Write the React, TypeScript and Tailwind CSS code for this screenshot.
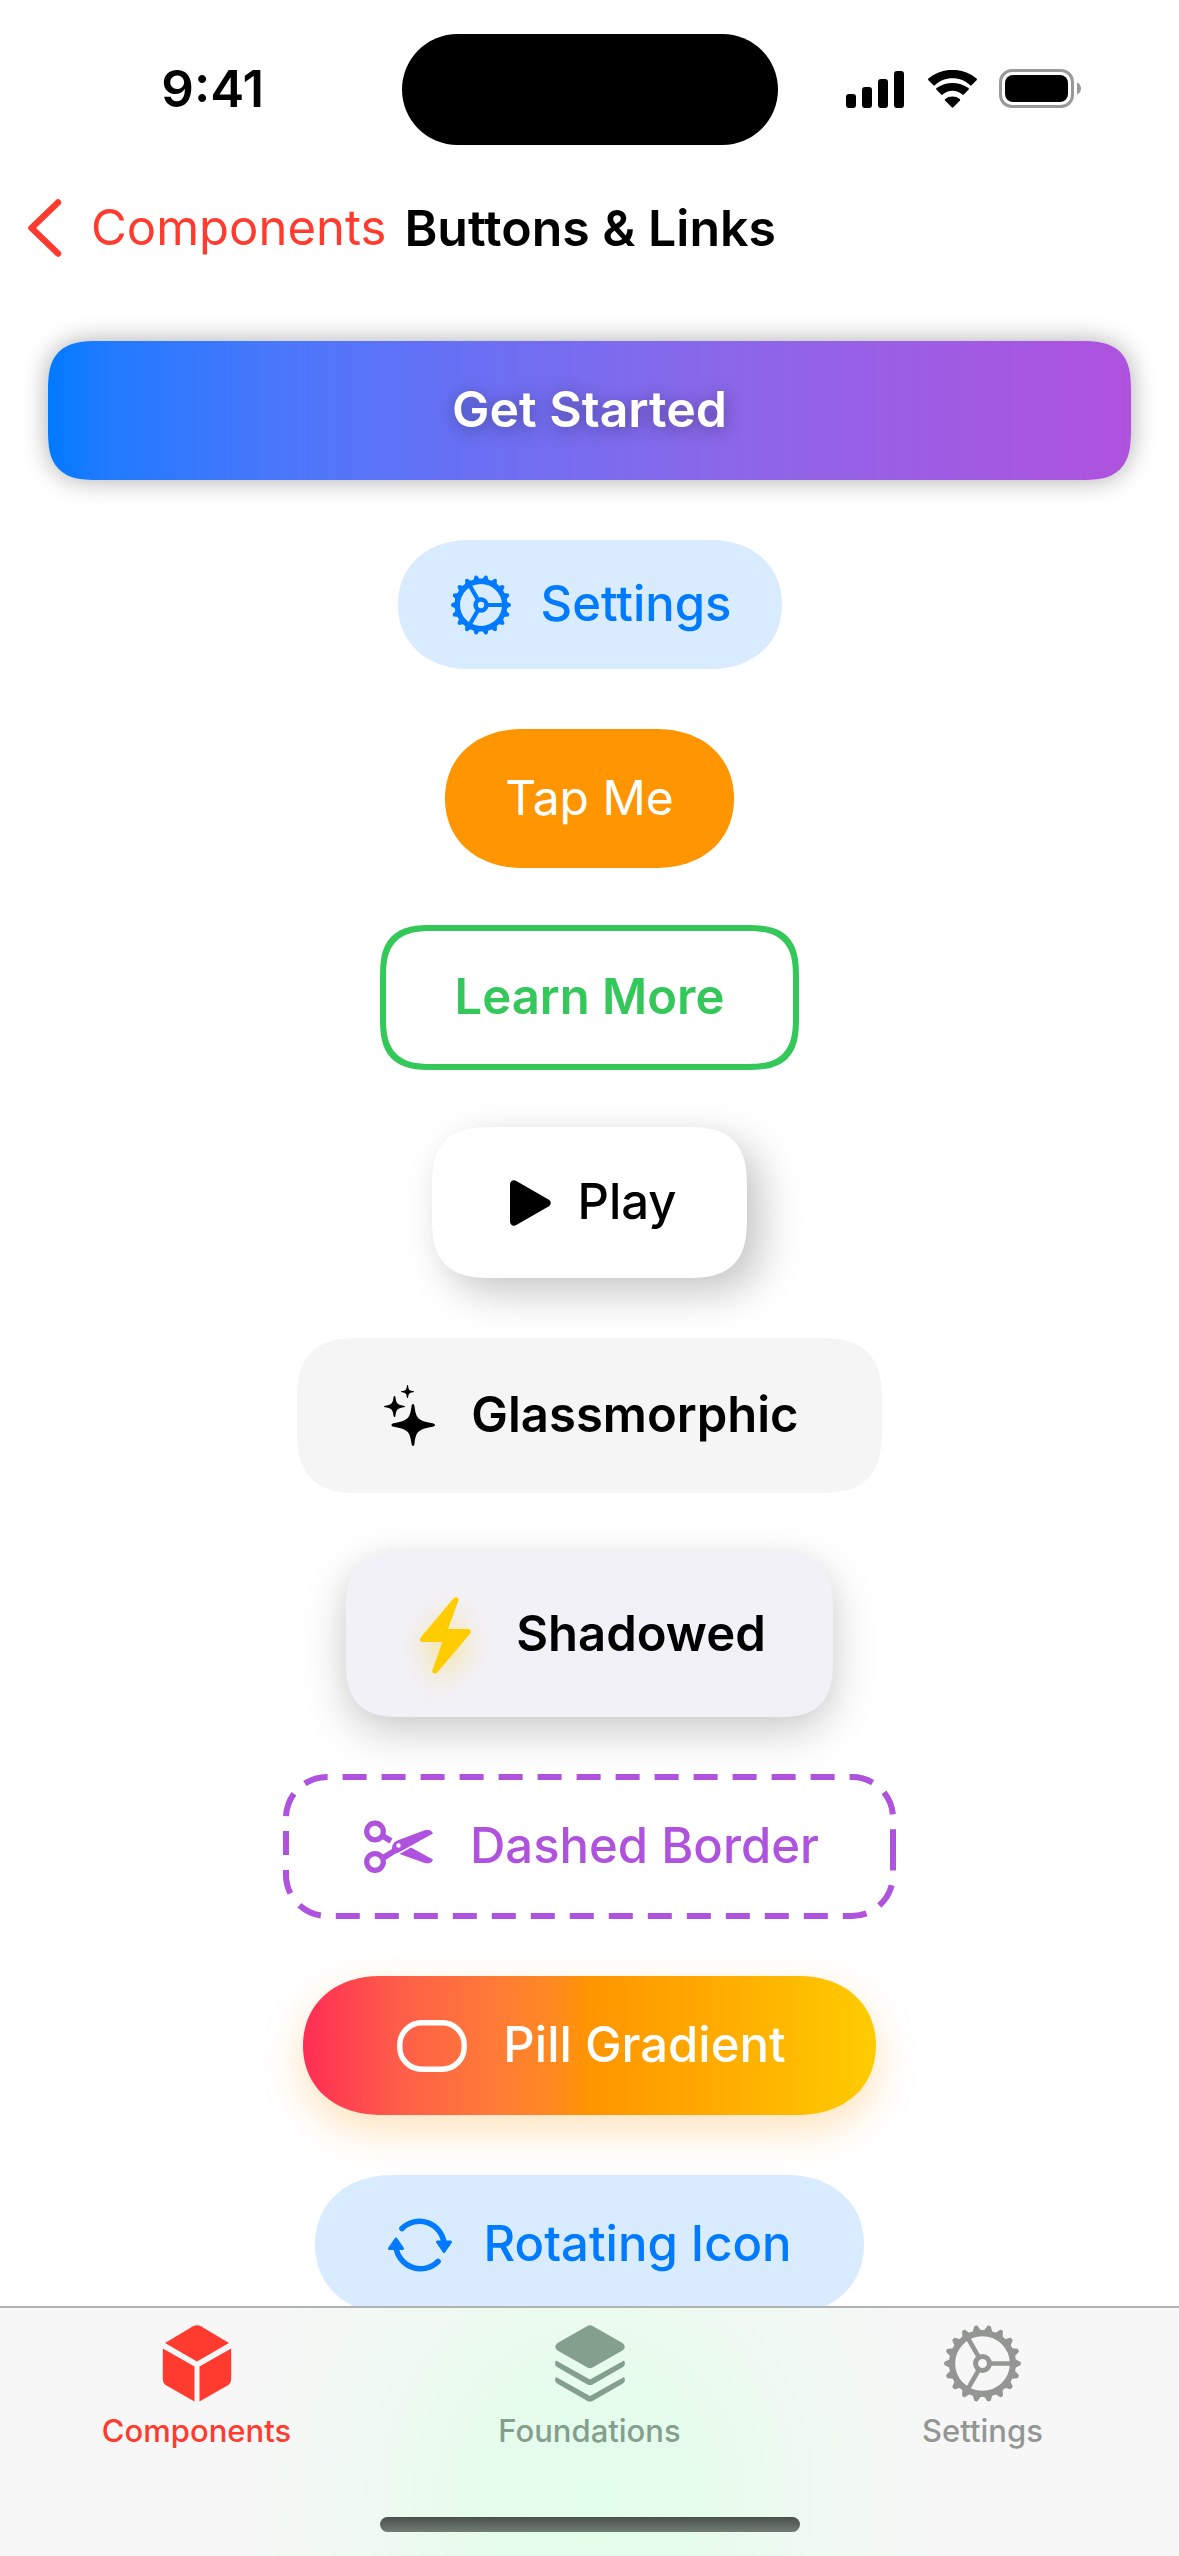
import type { ReactNode } from "react";

const rad = (d: number) => (d * Math.PI) / 180;
const pt = (r: number, d: number) =>
  `${(50 + r * Math.cos(rad(d))).toFixed(2)} ${(50 - r * Math.sin(rad(d))).toFixed(2)}`;

const TEETH = Array.from({ length: 18 }, (_, i) => {
  const a = i * 20;
  return `M${pt(41, a - 7)}L${pt(48.5, a - 1.5)}L${pt(48.5, a + 1.5)}L${pt(41, a + 7)}Z`;
}).join("");

function Gear({ className, weight = 7 }: { className: string; weight?: number }) {
  return (
    <svg viewBox="0 0 100 100" className={className} fill="none" stroke="currentColor" aria-hidden="true">
      <path d={TEETH} fill="currentColor" strokeWidth="2.5" strokeLinejoin="round" />
      <circle cx="50" cy="50" r="39.5" strokeWidth={weight + 1} />
      <circle cx="50" cy="50" r="9" strokeWidth={weight - 0.5} />
      <path
        d={`M${pt(11, 0)}L${pt(38, 0)}M${pt(11, 120)}L${pt(38, 120)}M${pt(11, 240)}L${pt(38, 240)}`}
        strokeWidth={weight - 1}
      />
    </svg>
  );
}

function Label({ children }: { children: ReactNode }) {
  return <span className="block pb-[3px]">{children}</span>;
}

function StatusBar() {
  return (
    <div className="grid h-[178px] grid-cols-[1fr_376px_1fr] items-center">
      <time className="pb-px pl-6 text-center text-[51px] leading-[60px] font-semibold">9:41</time>
      <div className="h-[111px] rounded-full bg-black" />
      <div className="flex h-[39px] items-center justify-center gap-[21px] pr-[28px]">
        <svg viewBox="0 0 60 38" className="h-[38px] w-[60px]" aria-label="Cellular signal">
          <rect x="0" y="24" width="10" height="14" rx="3" />
          <rect x="16" y="17" width="10" height="21" rx="3" />
          <rect x="32" y="9" width="10" height="29" rx="3" />
          <rect x="48" y="1" width="10" height="37" rx="3" />
        </svg>
        <svg viewBox="0 0 51 38" className="h-[38px] w-[51px]" aria-label="Wi-Fi">
          <path d="M25.5 8.3C32.3 8.3 38.500 10.900 43.200 15.300C43.600 15.700 44.200 15.700 44.600 15.300L49.600 10.200C50.100 9.700 50.100 9 49.600 8.500C36.100-3.100 14.900-3.100 1.400 8.500C.9 9 .9 9.700 1.400 10.200L6.400 15.300C6.800 15.700 7.400 15.700 7.800 15.300C12.500 10.900 18.700 8.300 25.500 8.300Z" />
          <path d="M25.500 20.800C29.200 20.800 32.700 22.200 35.400 24.600C35.800 25 36.400 25 36.800 24.600L41.500 19.800C42 19.300 42 18.600 41.500 18.100C32.500 11.200 18.500 11.200 9.500 18.100C9 18.600 9 19.300 9.500 19.800L14.200 24.600C14.600 25 15.200 25 15.600 24.600C18.300 22.200 21.800 20.800 25.500 20.800Z" />
          <path d="M32.800 30.700C33.300 30.200 33.300 29.400 32.700 29C28.600 25.700 22.400 25.700 18.300 29C17.700 29.400 17.700 30.200 18.200 30.700L24.700 37.300C25.200 37.800 25.800 37.800 26.300 37.300Z" />
        </svg>
        <svg viewBox="0 0 84 40" className="h-[40px] w-[84px]" aria-label="Battery">
          <rect x="1.500" y="1.500" width="72" height="36" rx="11.500" fill="none" stroke="#999" strokeWidth="3" />
          <rect x="6" y="6" width="63" height="27" rx="8" />
          <path d="M78 13.500C80.800 14.500 82 17 82 19.500S80.800 24.500 78 25.500Z" fill="#999" />
        </svg>
      </div>
    </div>
  );
}

function NavBar() {
  return (
    <header className="flex h-[99px] items-center gap-[18px] px-[27px] leading-[60px]">
      <a href="#components" className="flex items-center gap-[28px] text-[49px] text-[#ff3b30]">
        <svg viewBox="0 0 36 60" className="h-[60px] w-[36px]" fill="none" stroke="currentColor" aria-hidden="true">
          <path d="M31 4.500L4.500 30L31 55.500" strokeWidth="6.500" strokeLinecap="round" strokeLinejoin="round" />
        </svg>
        <span>Components</span>
      </a>
      <h1 className="text-[50px] font-semibold">Buttons &amp; Links</h1>
    </header>
  );
}

function Tab({ label, active, tint, children }: { label: string; active?: boolean; tint: string; children: ReactNode }) {
  return (
    <button
      type="button"
      aria-current={active ? "page" : undefined}
      className={`flex flex-col items-center gap-[12px] pt-[17px] text-[31px] leading-[34px] font-medium ${tint}`}
    >
      {children}
      {label}
    </button>
  );
}

export default function App() {
  return (
    <div className="flex h-screen flex-col overflow-hidden bg-white font-['Inter',sans-serif] text-black">
      <StatusBar />
      <NavBar />
      <main className="flex min-h-0 flex-1 flex-col items-center gap-[60px] overflow-hidden px-12 pt-[64px] text-[49px] leading-[61px] *:shrink-0">
        <button
          type="button"
          className="h-[139px] w-full rounded-[36px] bg-linear-[90deg,#007aff,#1f7aff_5%,#4777fb_20%,#6b6ff3_40%,#8868ea_60%,#9c5de4_80%,#af52de] text-[50px] font-semibold text-white shadow-[0_0_26px_rgba(0,0,0,0.33)] text-shadow-[0_3px_18px_rgba(0,0,0,0.35)] supports-[corner-shape:squircle]:rounded-[50px] supports-[corner-shape:squircle]:[corner-shape:superellipse(1.5)]"
        >
          <Label>Get Started</Label>
        </button>
        <button
          type="button"
          className="flex h-[129px] items-center gap-[30px] rounded-full bg-[#d9ebff] pr-[50px] pl-[53px] font-medium text-[#007aff] supports-[corner-shape:squircle]:rounded-[72px/65px] supports-[corner-shape:squircle]:[corner-shape:superellipse(1.1)]"
        >
          <Gear className="size-[60px]" weight={8} />
          <Label>Settings</Label>
        </button>
        <button
          type="button"
          className="h-[139px] rounded-full bg-[#ff9500] px-[60px] text-[48px] text-white supports-[corner-shape:squircle]:rounded-[78px/70px] supports-[corner-shape:squircle]:[corner-shape:superellipse(1.1)]"
        >
          <Label>Tap Me</Label>
        </button>
        <button
          type="button"
          className="h-[139px] rounded-[36px] px-[72px] font-semibold text-[#34c759] outline-6 -outline-offset-3 outline-[#34c759] supports-[corner-shape:squircle]:rounded-[50px] supports-[corner-shape:squircle]:[corner-shape:superellipse(1.5)]"
        >
          <Label>Learn More</Label>
        </button>
        <button
          type="button"
          className="flex h-[151px] items-center gap-[25px] rounded-[45px] bg-white pr-[70px] pl-[78px] font-medium shadow-[15px_15px_42px_rgba(0,0,0,0.22),0_0_30px_rgba(0,0,0,0.02)] supports-[corner-shape:squircle]:rounded-[62px] supports-[corner-shape:squircle]:[corner-shape:superellipse(1.5)]"
        >
          <svg viewBox="0 0 42 46" className="h-[46px] w-[42px]" aria-hidden="true">
            <path d="M0 4.500C0 1 3.300-.9 6.300.9L38.500 19.600C41.500 21.400 41.500 24.600 38.500 26.400L6.300 45.100C3.300 46.900 0 45 0 41.500Z" />
          </svg>
          <Label>Play</Label>
        </button>
        <button
          type="button"
          className="flex h-[155px] items-center gap-[36px] rounded-[48px] bg-[#f5f5f5] pr-[83px] pl-[87px] font-semibold supports-[corner-shape:squircle]:rounded-[66px] supports-[corner-shape:squircle]:[corner-shape:superellipse(1.5)]"
        >
          <svg viewBox="0 0 51 61" className="h-[61px] w-[51px]" aria-hidden="true">
            <path d="M29 19C30 19 30.300 20 30.500 21.500C32 32.500 33.500 35.500 47 38C49.500 38.500 51 38.800 51 40S49.500 41.500 47 42C33.500 44.500 32 47.500 30.500 58.500C30.300 60 30 61 29 61S27.700 60 27.500 58.500C26 47.500 24.500 44.500 11 42C8.500 41.500 7.500 41.200 7.500 40S8.500 38.500 11 38C24.500 35.500 26 32.500 27.500 21.500C27.700 20 28 19 29 19Z" />
            <path d="M10.500 11C11 11 11.300 11.400 11.400 12C12.200 18 13 19.500 19.500 20.700C20.500 20.900 21 21 21 21.500S20.500 22.100 19.500 22.300C13 23.500 12.200 25 11.400 31C11.300 31.600 11 32 10.500 32S9.700 31.600 9.600 31C8.800 25 8 23.500 1.500 22.300C.5 22.100 0 22 0 21.500S.5 20.900 1.500 20.700C8 19.500 8.800 18 9.600 12C9.700 11.400 10 11 10.500 11Z" />
            <path d="M23.500 0C23.900 0 24 .3 24.100 .7C24.600 4.600 25 5.400 29 6.100C29.700 6.200 30 6.300 30 6.700S29.700 7.100 29 7.200C25 7.900 24.600 8.700 24.100 12.400C24 12.800 23.900 13 23.500 13S23 12.800 22.900 12.400C22.400 8.700 22 7.900 18 7.200C17.300 7.100 17 7 17 6.700S17.300 6.200 18 6.100C22 5.400 22.400 4.600 22.900 .7C23 .3 23.100 0 23.500 0Z" />
          </svg>
          <Label>Glassmorphic</Label>
        </button>
        <button
          type="button"
          className="flex h-[164px] items-center gap-[45px] rounded-[42px] bg-[#f2f1f7] pr-[67px] pl-[74px] font-semibold shadow-[0_15px_45px_rgba(0,0,0,0.2),0_0_24px_rgba(0,0,0,0.03)] supports-[corner-shape:squircle]:rounded-[58px] supports-[corner-shape:squircle]:[corner-shape:superellipse(1.5)]"
        >
          <svg
            viewBox="0 0 51 77"
            className="h-[77px] w-[51px] overflow-visible text-[#ffcc00] drop-shadow-[0_10px_14px_rgba(255,204,0,0.4)]"
            fill="currentColor"
            aria-hidden="true"
          >
            <path d="M33.500 1.600C35.800-1.300 39.500 .5 38.300 4L28 32H48C50.800 32 51.700 34.500 50 36.800L17.500 75.200C15.200 78 11.300 76.300 12.500 72.800L22.500 45H2.500C-.2 45-.8 42.500 .9 40.200Z" />
          </svg>
          <Label>Shadowed</Label>
        </button>
        <button
          type="button"
          className="relative flex h-[139px] items-center gap-[36px] pr-[74px] pl-[78px] font-medium text-[#af52de]"
        >
          <svg
            viewBox="0 0 607 139"
            preserveAspectRatio="none"
            className="absolute inset-0 size-full overflow-visible"
            fill="none"
            stroke="currentColor"
            aria-hidden="true"
          >
            <path
              d="M607 69.500V98A41 41 0 0 1 566 139H41A41 41 0 0 1 0 98V41A41 41 0 0 1 41 0H566A41 41 0 0 1 607 41V69.500"
              strokeWidth="6"
              strokeDasharray="24 15"
            />
          </svg>
          <svg viewBox="0 0 70 54" className="h-[54px] w-[70px]" aria-hidden="true" fill="none" stroke="currentColor">
            <circle cx="11" cy="11.500" r="8.300" strokeWidth="5.200" />
            <circle cx="11" cy="42" r="8.300" strokeWidth="5.200" />
            <path d="M18 15.500L27 21" strokeWidth="6" />
            <path
              d="M18 35L28 29C28 24.500 30 21.500 34.500 20L60 10.500C64 9 67.500 10 69 13.500L36.500 31.500C30 34 27 36.500 21.500 40Z"
              fill="currentColor"
              stroke="none"
            />
            <path d="M35.500 34L47 27.500L69 39.500C67.500 43.500 64 44 60 42.800Z" fill="currentColor" stroke="none" />
            <circle cx="34.500" cy="25.500" r="2.200" fill="#fff" stroke="none" />
          </svg>
          <Label>Dashed Border</Label>
        </button>
        <button
          type="button"
          className="flex h-[139px] items-center gap-[36px] rounded-full bg-linear-[90deg,#ff2d55,#ff5e48_17%,#ff7a38_33%,#ff8a20_44%,#ff9500_50%,#ffae00_75%,#ffcc00] pr-[90px] pl-[94px] font-medium text-white shadow-[0_15px_42px_rgba(255,149,0,0.27)] supports-[corner-shape:squircle]:rounded-[78px/70px] supports-[corner-shape:squircle]:[corner-shape:superellipse(1.1)]"
        >
          <svg viewBox="0 0 70 52" className="h-[52px] w-[70px]" fill="none" stroke="currentColor" aria-hidden="true">
            <rect x="2.800" y="2.800" width="64.400" height="46.400" rx="22" strokeWidth="5.400" />
          </svg>
          <Label>Pill Gradient</Label>
        </button>
        <button
          type="button"
          className="flex h-[139px] items-center gap-[30px] rounded-full bg-[#d9ebff] px-[72px] font-medium text-[#007aff] supports-[corner-shape:squircle]:rounded-[78px/70px] supports-[corner-shape:squircle]:[corner-shape:superellipse(1.1)]"
        >
          <svg viewBox="0 0 66 56" className="h-[56px] w-[66px]" fill="none" stroke="currentColor" aria-hidden="true">
            <path d="M15 11.500A24.700 24.700 0 0 1 57 26" strokeWidth="5.600" strokeLinecap="round" />
            <path d="M51 44.500A24.700 24.700 0 0 1 9 30" strokeWidth="5.600" strokeLinecap="round" />
            <path d="M50.500 25H63.500L57 34.500Z" fill="currentColor" strokeWidth="3" strokeLinejoin="round" />
            <path d="M2.500 31.500H15.500L9 22Z" fill="currentColor" strokeWidth="3" strokeLinejoin="round" />
          </svg>
          <Label>Rotating Icon</Label>
        </button>
      </main>
      <nav className="flex h-[250px] shrink-0 flex-col justify-between border-t-2 border-[#b0b2b1] bg-[#f7f7f7] bg-[radial-gradient(ellipse_370px_400px_at_50%_75%,#e2fdea,#e6fcec_30%,#f0f9f2_62%,#f7f7f7)] pb-[24px]">
        <div className="grid grid-cols-3">
          <Tab label="Components" active tint="text-[#ff3b30]">
            <svg viewBox="0 0 70 77" className="h-[77px] w-[70px]" fill="currentColor" aria-hidden="true">
              <path d="M31 1.200Q35-.8 39 1.200L67 18L35 36.500L3 18Z" />
              <path d="M.8 23.500L32.500 41.500V76.500L4.500 60.500Q.8 58 .8 54Z" />
              <path d="M69.200 23.500L37.500 41.500V76.500L65.500 60.500Q69.200 58 69.200 54Z" />
            </svg>
          </Tab>
          <Tab label="Foundations" tint="text-[#849f8d]">
            <svg viewBox="0 0 70 77" className="h-[77px] w-[70px]" fill="currentColor" aria-hidden="true">
              <path d="M32 1.200Q35-.5 38 1.200L67.500 18Q72 22 67.500 25.500L38 42.300Q35 44 32 42.300L2.500 25.500Q-2 22 2.500 18Z" />
              <path d="M1 35.500L35 54.500L69 35.500Q71.500 39.500 67.500 42.300L38 59.200Q35 61 32 59.200L2.500 42.300Q-1.500 39.500 1 35.500Z" />
              <path d="M1 52L35 71L69 52Q71.500 56 67.500 58.800L38 75.700Q35 77.500 32 75.700L2.500 58.800Q-1.500 56 1 52Z" />
            </svg>
          </Tab>
          <Tab label="Settings" tint="text-[#939693]">
            <Gear className="size-[77px]" />
          </Tab>
        </div>
        <div className="h-[15px] w-[420px] self-center rounded-full bg-linear-to-b from-[#4a504c] to-[#727d75]" />
      </nav>
    </div>
  );
}
